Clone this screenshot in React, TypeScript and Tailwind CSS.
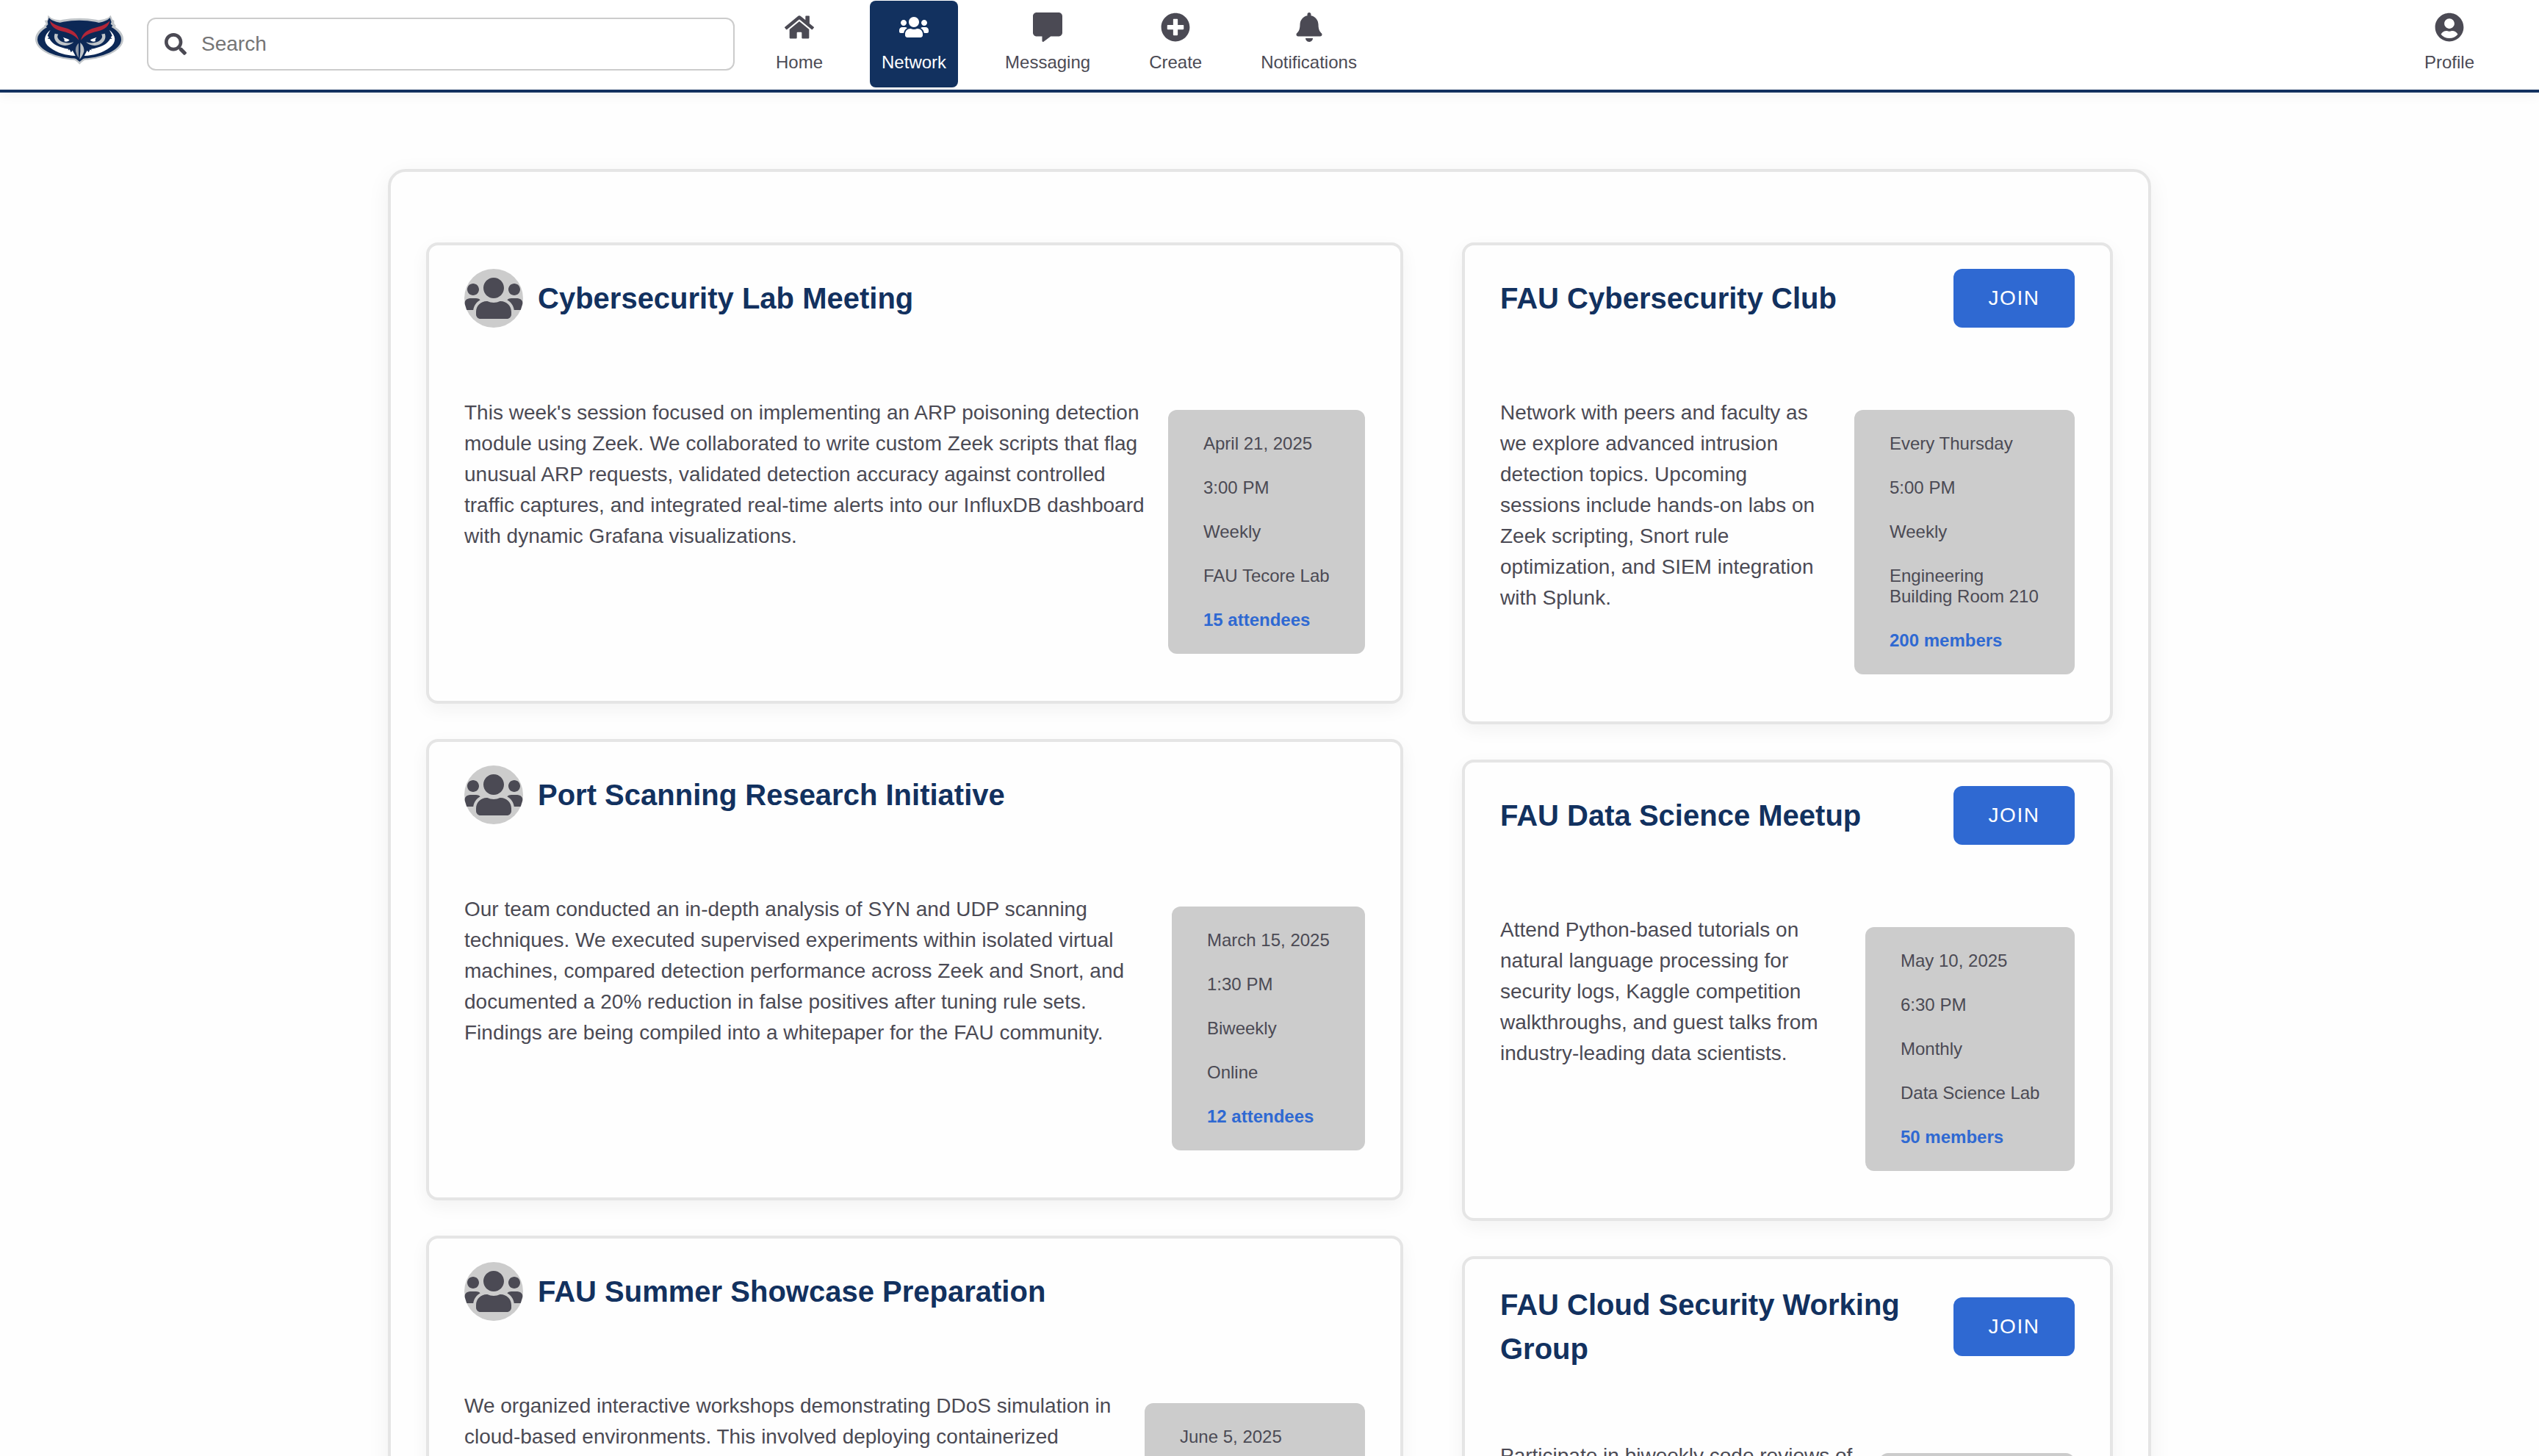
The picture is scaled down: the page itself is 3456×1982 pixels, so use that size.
import type { ReactNode } from "react";
import type { IconType } from "react-icons";
import { FaBell, FaHome, FaPlusCircle, FaSearch, FaUserCircle, FaUsers } from "react-icons/fa";
import { FaMessage } from "react-icons/fa6";

function OwlFaceHalf() {
  return (
    <>
      <path d="M62 62 C34 84 30 112 60 134 C88 156 128 166 164 168 L152 146 L146 154 L140 142 L134 146 L136 140 C100 134 70 122 58 98 L50 98 L56 92 L50 86 Q54 74 62 62 Z" fill="#fff" />
      <path d="M80 77 C72 96 84 116 108 124 C128 130 148 122 156 112 C138 118 118 116 104 108 C90 98 88 88 94 80 Z" fill="#c0c5c9" />
      <path d="M113 92 L134 100 L140 104 Q128 114 118 108 Q122 102 113 92 Z" fill="#fff" />
      <path d="M60 24 C70 38 92 46 122 54 C152 62 172 76 178 104 C160 82 138 74 112 68 C80 62 62 46 60 24 Z" fill="#b32638" />
    </>
  );
}

function OwlLogo() {
  return (
    <svg viewBox="0 0 360 204" className="h-[68px] w-[120px] shrink-0" aria-label="Owls">
      <g fill="#c0c5c9">
        <ellipse cx="180" cy="100" rx="180" ry="86" />
        <path d="M52 2 L66 14 Q80 20 98 22 L180 60 L262 22 Q282 20 298 12 L308 2 L315 20 L322 24 L322 36 L330 46 L322 54 L180 100 L40 54 L36 44 L44 38 L38 24 L50 22 Z" />
        <path d="M140 178 Q164 184 181 203 Q198 184 222 178 Z" />
      </g>
      <g fill="#0c2856">
        <ellipse cx="180" cy="101" rx="171" ry="78" />
        <path d="M56 13 Q70 28 100 32 L180 60 L262 32 Q290 28 305 13 L311 30 L308 38 L316 44 L306 58 L180 100 L54 58 L44 48 L52 40 L50 28 Z" />
        <path d="M148 172 Q166 178 181 192 Q196 178 214 172 Z" />
      </g>
      <OwlFaceHalf />
      <g transform="matrix(-1 0 0 1 364 0)">
        <OwlFaceHalf />
      </g>
      <path d="M181 108 Q156 126 162 152 Q168 176 181 190 Q194 176 202 152 Q206 126 181 108 Z" fill="#0c2856" />
      <path d="M177 116 Q162 130 165 150 Q170 168 177 176 Z" fill="#8d97a5" />
      <path d="M184 114 Q201 130 199 150 Q192 172 181 182 Q186 150 184 114 Z" fill="#c0c5c9" />
    </svg>
  );
}

function NavItem({ icon: Icon, label, active = false }: { icon: IconType; label: string; active?: boolean }) {
  return (
    <a
      className={
        active
          ? "flex h-[118px] flex-col items-center rounded-[8px] bg-[#12315f] px-4 pt-4 text-white"
          : "flex h-[118px] flex-col items-center rounded-[8px] px-4 pt-4 text-[#4b4a54]"
      }
    >
      <Icon className="size-10" />
      <span className="mt-[14px] text-[24px] leading-[28px]">{label}</span>
    </a>
  );
}

function Navbar() {
  return (
    <header className="relative flex h-[126px] items-start border-b-4 border-[#12315f] bg-white pt-px pr-[72px] pl-12 shadow-[0_4px_16px_rgba(0,0,0,0.05)]">
      <div className="mt-[19px]">
        <OwlLogo />
      </div>
      <div className="mt-[23px] ml-8 flex h-[72px] w-[800px] items-center rounded-[12px] border-2 border-[#ccc] px-[22px] text-[28px]">
        <FaSearch className="size-[30px] text-[#4b4a54]" />
        <span className="ml-5 text-[#757575]">Search</span>
      </div>
      <nav className="ml-10 flex gap-12">
        <NavItem icon={FaHome} label="Home" />
        <NavItem icon={FaUsers} label="Network" active />
        <NavItem icon={FaMessage} label="Messaging" />
        <NavItem icon={FaPlusCircle} label="Create" />
        <NavItem icon={FaBell} label="Notifications" />
      </nav>
      <div className="ml-auto">
        <NavItem icon={FaUserCircle} label="Profile" />
      </div>
    </header>
  );
}

type Entry = {
  title: string;
  text: string;
  details: string[];
  count: string;
  infoWidth: string;
};

const meetings: Entry[] = [
  {
    title: "Cybersecurity Lab Meeting",
    text: "This week's session focused on implementing an ARP poisoning detection module using Zeek. We collaborated to write custom Zeek scripts that flag unusual ARP requests, validated detection accuracy against controlled traffic captures, and integrated real-time alerts into our InfluxDB dashboard with dynamic Grafana visualizations.",
    details: ["April 21, 2025", "3:00 PM", "Weekly", "FAU Tecore Lab"],
    count: "15 attendees",
    infoWidth: "w-[268px]",
  },
  {
    title: "Port Scanning Research Initiative",
    text: "Our team conducted an in-depth analysis of SYN and UDP scanning techniques. We executed supervised experiments within isolated virtual machines, compared detection performance across Zeek and Snort, and documented a 20% reduction in false positives after tuning rule sets. Findings are being compiled into a whitepaper for the FAU community.",
    details: ["March 15, 2025", "1:30 PM", "Biweekly", "Online"],
    count: "12 attendees",
    infoWidth: "w-[263px]",
  },
  {
    title: "FAU Summer Showcase Preparation",
    text: "We organized interactive workshops demonstrating DDoS simulation in cloud-based environments. This involved deploying containerized",
    details: ["June 5, 2025"],
    count: "",
    infoWidth: "w-[300px]",
  },
];

const clubs: Entry[] = [
  {
    title: "FAU Cybersecurity Club",
    text: "Network with peers and faculty as we explore advanced intrusion detection topics. Upcoming sessions include hands-on labs on Zeek scripting, Snort rule optimization, and SIEM integration with Splunk.",
    details: ["Every Thursday", "5:00 PM", "Weekly", "Engineering Building Room 210"],
    count: "200 members",
    infoWidth: "w-[300px]",
  },
  {
    title: "FAU Data Science Meetup",
    text: "Attend Python-based tutorials on natural language processing for security logs, Kaggle competition walkthroughs, and guest talks from industry-leading data scientists.",
    details: ["May 10, 2025", "6:30 PM", "Monthly", "Data Science Lab"],
    count: "50 members",
    infoWidth: "w-[285px]",
  },
  {
    title: "FAU Cloud Security Working Group",
    text: "Participate in biweekly code reviews of",
    details: [],
    count: "",
    infoWidth: "w-[266px]",
  },
];

function Card({ entry, header }: { entry: Entry; header: ReactNode }) {
  return (
    <article className="rounded-[16px] border-4 border-[#e5e5e5] bg-[#fefefe] px-12 pt-8 pb-16 shadow-[0_8px_24px_rgba(0,0,0,0.05)]">
      <div className="flex min-h-20 items-center">{header}</div>
      <div className="flex items-start gap-8 pt-[95px]">
        <p className="min-w-0 flex-1 text-[28px] leading-[42px]">{entry.text}</p>
        <div className={`mt-[17px] flex min-h-[332px] shrink-0 flex-col gap-8 rounded-[12px] bg-[#ccc] px-12 py-8 text-[24px] leading-[28px] ${entry.infoWidth}`}>
          {entry.details.map((detail) => (
            <p key={detail} className="-mr-3">{detail}</p>
          ))}
          <p className="-mr-3 font-bold text-[#2f69d2]">{entry.count}</p>
        </div>
      </div>
    </article>
  );
}

function Title({ children }: { children: ReactNode }) {
  return <h2 className="text-[40px] leading-[60px] font-bold text-[#12315f]">{children}</h2>;
}

export default function App() {
  return (
    <div className="h-screen overflow-hidden bg-[#fefefe] font-['Liberation_Sans',Arial,sans-serif] text-[#4b4a54]">
      <Navbar />
      <main className="mx-auto mt-[104px] flex min-h-[2400px] w-[2400px] items-start gap-20 rounded-[24px] border-4 border-[#e5e5e5] bg-[#fefefe] px-12 pt-24 shadow-[0_8px_32px_rgba(0,0,0,0.06)]">
        <section className="flex w-[1330px] flex-col gap-12">
          {meetings.map((entry) => (
            <Card
              key={entry.title}
              entry={entry}
              header={
                <>
                  <span className="mr-5 flex size-20 items-center justify-center overflow-hidden rounded-full bg-[#ccc]">
                    <FaUsers className="size-20" />
                  </span>
                  <Title>{entry.title}</Title>
                </>
              }
            />
          ))}
        </section>
        <section className="flex w-[886px] flex-col gap-12">
          {clubs.map((entry) => (
            <Card
              key={entry.title}
              entry={entry}
              header={
                <>
                  <Title>{entry.title}</Title>
                  <button className="ml-auto h-20 w-[165px] shrink-0 rounded-[12px] bg-[#2f69d2] text-[28px] tracking-[1.6px] text-white">
                    JOIN
                  </button>
                </>
              }
            />
          ))}
        </section>
      </main>
    </div>
  );
}
